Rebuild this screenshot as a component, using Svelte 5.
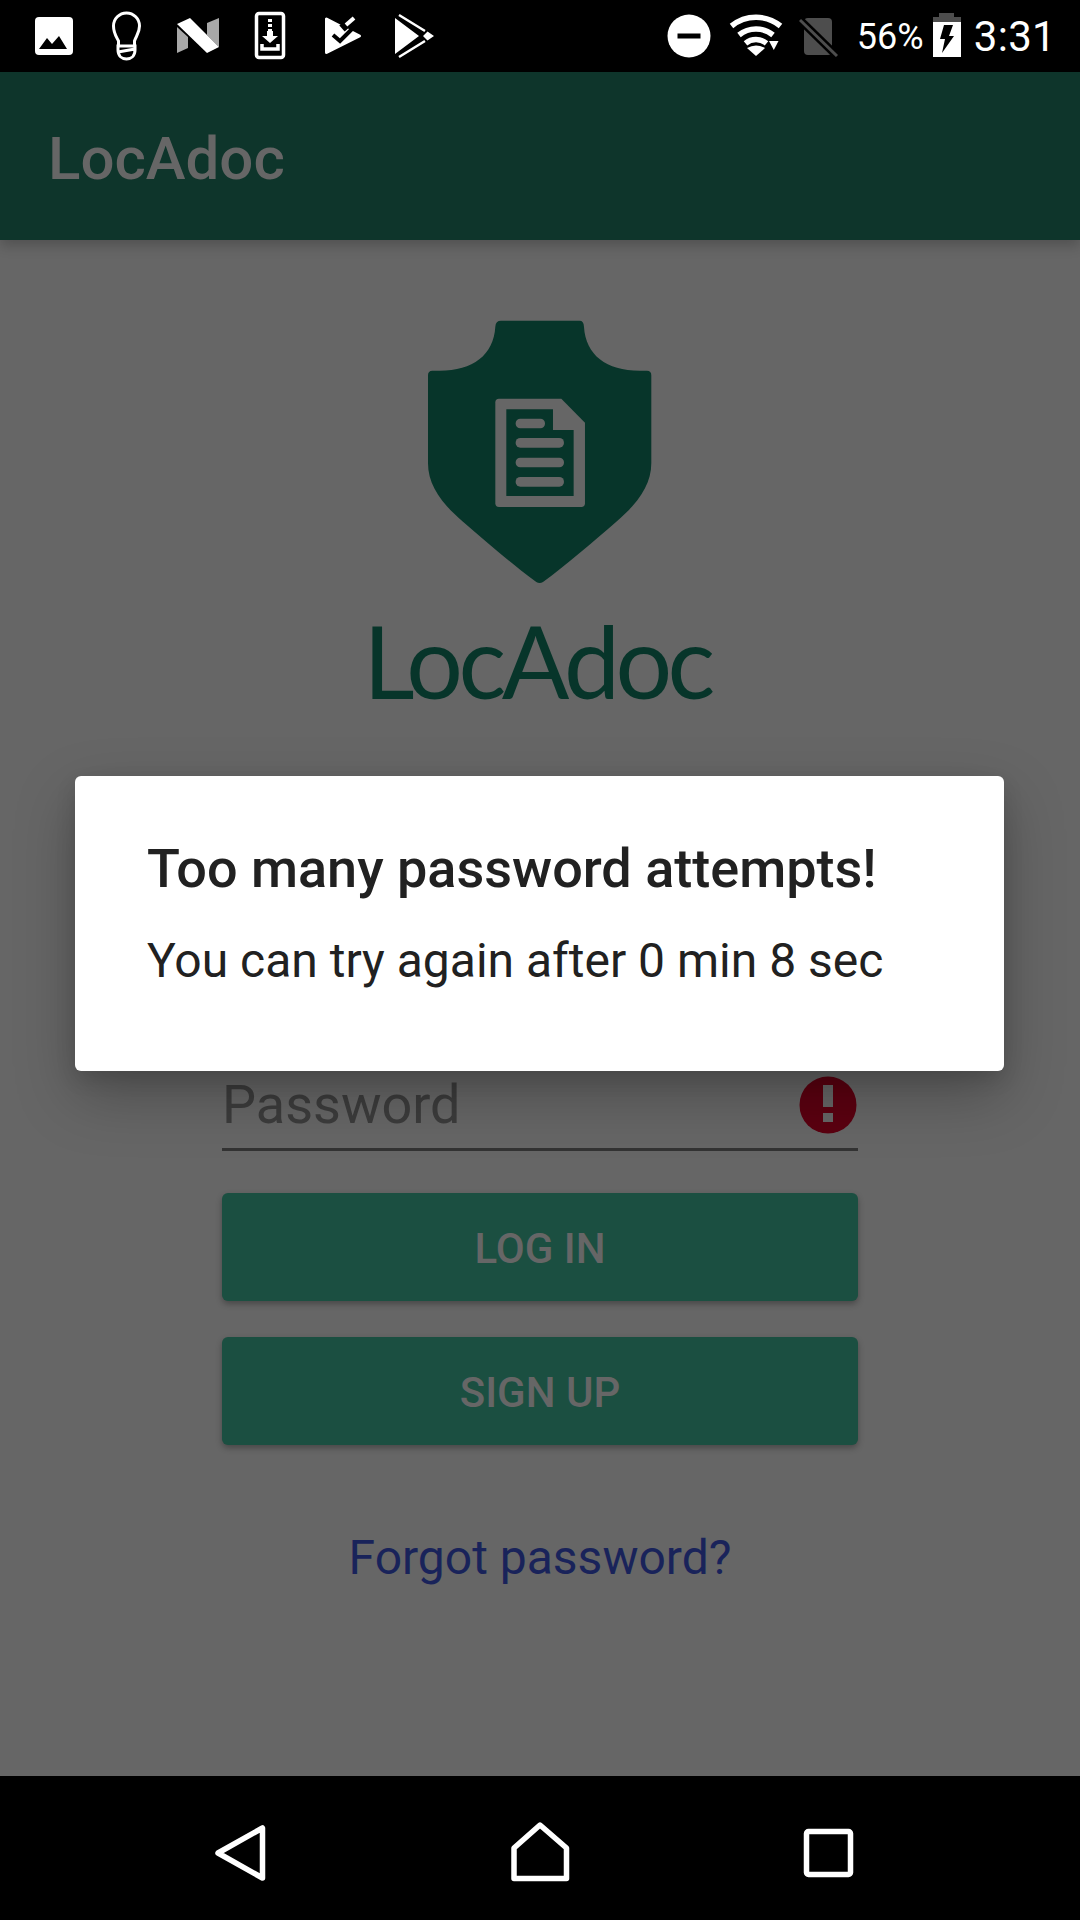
<script>
  const title = 'LocAdoc';
</script>

<div class="screen">
  <header class="status">
    <div class="notif">
      <svg viewBox="0 0 72 72"><rect x="17" y="17" width="38" height="38" rx="4" fill="#fff"/><path d="M21 49 L29 38 L34 44 L41 36 L49 49Z" fill="#000"/></svg>
      <svg viewBox="0 0 72 72"><path d="M28.5 45 V41 C26 36 23.5 33 23.5 26 A13 13 0 1 1 49.5 26 C49.5 33 46 36 44.5 41 V45" fill="none" stroke="#fff" stroke-width="3"/><path d="M28 46 H45 V50 C45 56 41 59 36.5 59 C32 59 28 56 28 50 Z M28 52 L45 49" fill="none" stroke="#fff" stroke-width="3"/></svg>
      <svg viewBox="0 0 72 72"><path d="M15 27 L15 53 L26 48 L26 37Z M45 23 L57 18 L57 47 L45 35Z" fill="#a8a8a8"/><path d="M15 24 L28 18 L57 47 L45 53Z" fill="#fff"/></svg>
      <svg viewBox="0 0 72 72"><rect x="22.5" y="13.5" width="27" height="44" rx="2.5" fill="none" stroke="#fff" stroke-width="3.5"/><path d="M34 19h4v3h-4zM34 24h4v3h-4zM34 29h4v3h-4zM33 31h6v5h5l-8 7-8-7h5z" fill="#fff"/><path d="M28 44 V49 H44 V44" fill="none" stroke="#fff" stroke-width="3.5"/></svg>
      <svg viewBox="0 0 72 72"><path d="M20.5 19 V52.5 L53.5 36Z" fill="#fff" stroke="#fff" stroke-width="3" stroke-linejoin="round"/><path d="M27 35 L34 41 L47 28" fill="none" stroke="#000" stroke-width="4"/><path d="M36 28.5 L50 16" fill="none" stroke="#000" stroke-width="8"/><path d="M40 25 L48 18" fill="none" stroke="#fff" stroke-width="4"/></svg>
      <svg viewBox="0 0 72 72"><path d="M17 18 V54 L41 36Z M45 36 L49.5 31.5 L56 36 L49.5 40.5Z" fill="#fff"/><path d="M21 15 L47 31 M21 57 L47 41" stroke="#fff" stroke-width="2.5" fill="none"/></svg>
    </div>
    <div class="sys">
      <svg class="dnd" viewBox="0 0 44 44"><circle cx="22" cy="22" r="21.5" fill="#fff"/><rect x="10.5" y="19.5" width="23" height="5" fill="#000"/></svg>
      <svg class="wifi" viewBox="0 0 50 42"><g fill="none" stroke="#fff" stroke-width="5.5"><path d="M0.5 11 A38.7 38.7 0 0 1 49.5 11"/><path d="M8 20 A27 27 0 0 1 42 20"/><path d="M14.5 28.3 A16.5 16.5 0 0 1 35.5 28.3"/></g><path d="M25 41 L16 33 Q25 28 34 33Z" fill="#fff"/><path d="M38 26h9.5l-4.7 9z" fill="#fff"/></svg>
      <svg class="sim" viewBox="0 0 40 40"><path d="M9 1 H29 Q33 1 33 5 V34 Q33 38 29 38 H9 Q5 38 5 34 V5 Q5 1 9 1Z" fill="#4d4d4d"/><path d="M0 2 L37 38" stroke="#000" stroke-width="8"/><path d="M1 3 L38 39" stroke="#4d4d4d" stroke-width="3"/></svg>
      <span class="pct">56%</span>
      <svg class="batt" viewBox="0 0 28 44"><path d="M6 0h15v4h7v9H0V4h6z" fill="#4d4d4d"/><rect y="9" width="28" height="35" fill="#fff"/><path d="M11 12 H20 L16 23 H21 L9 40 L12 26 H7Z" fill="#000"/></svg>
      <span class="time">3:31</span>
    </div>
  </header>

  <div class="appbar">{title}</div>

  <main class="content">
    <svg class="shield" viewBox="265 60 670 795">
      <path d="M484 62 H720 Q732 62 733 80 C738 165 800 212 900 212 H922 Q935 212 935 226 V490 C935 555 895 610 830 665 C760 725 680 795 610 846 Q600 852 590 846 C520 795 440 725 370 665 C305 610 265 555 265 490 V226 Q265 212 278 212 H300 C400 212 462 165 467 80 Q468 62 484 62Z" fill="#07352a"/>
      <path d="M478 296 H665 L736 368 V610 Q736 621 725 621 H478 Q467 621 467 610 V307 Q467 296 478 296Z" fill="#666"/>
      <path d="M500 328 H640 V390 H702 V588 H500Z" fill="#07352a"/>
      <g fill="#666"><rect x="528" y="356" width="88" height="29" rx="14"/><rect x="528" y="414" width="145" height="29" rx="14"/><rect x="528" y="473" width="145" height="29" rx="14"/><rect x="528" y="531" width="145" height="29" rx="14"/></g>
    </svg>
    <div class="brand">LocAdoc</div>

    <div class="field">
      <span class="ph">Password</span>
      <svg class="err" viewBox="0 0 58 58"><circle cx="29" cy="29" r="28.5" fill="#5b0010"/><rect x="24" y="9" width="10" height="22" fill="#666"/><rect x="24" y="37" width="10" height="9" fill="#666"/></svg>
    </div>

    <button class="btn first">LOG IN</button>
    <button class="btn second">SIGN UP</button>
    <div class="forgot">Forgot password?</div>
  </main>

  <nav class="nav">
    <svg viewBox="0 0 120 144"><path d="M82.5 52 V102 L38 77Z" fill="none" stroke="#fff" stroke-width="5.5" stroke-linejoin="round"/></svg>
    <svg viewBox="0 0 120 144"><path d="M34 72 L60 49 L86.5 72 V102.5 H34Z" fill="none" stroke="#fff" stroke-width="5.5" stroke-linejoin="round"/></svg>
    <svg viewBox="0 0 120 144"><rect x="26.5" y="55.5" width="44" height="43" rx="2" fill="none" stroke="#fff" stroke-width="5.5"/></svg>
  </nav>

  <div class="dialog" role="alertdialog">
    <h2>Too many password attempts!</h2>
    <p>You can try again after 0 min 8 sec</p>
  </div>
</div>

<style>
  :global(body) { margin: 0; background: #666; }
  .screen {
    position: relative;
    width: 1080px;
    height: 1920px;
    display: flex;
    flex-direction: column;
    overflow: hidden;
    background: #666;
    font-family: Roboto, "Liberation Sans", sans-serif;
  }
  .status {
    height: 72px;
    flex: none;
    background: #000;
    display: flex;
    justify-content: space-between;
    color: #fff;
  }
  .notif { display: flex; padding-left: 18px; }
  .notif svg { width: 72px; height: 72px; display: block; }
  .sys { display: flex; align-items: flex-start; padding-right: 24px; }
  .sys svg { display: block; flex: none; }
  .dnd { width: 44px; height: 44px; margin-top: 14px; }
  .wifi { width: 50px; height: 42px; margin: 15px 0 0 20px; overflow: visible; }
  .sim { width: 40px; height: 40px; margin: 17px 0 0 18px; }
  .pct { font-size: 36px; line-height: 42px; margin: 16px 0 0 18px; width: 65px; }
  .batt { width: 28px; height: 44px; margin: 13px 0 0 11px; }
  .time { font-size: 42px; line-height: 50px; margin: 12px 0 0 13px; letter-spacing: 0.3px; }

  .appbar {
    position: relative;
    z-index: 1;
    height: 168px;
    flex: none;
    box-sizing: border-box;
    padding-left: 48px;
    background: #0e352b;
    color: #666;
    font-size: 60px;
    font-weight: 500;
    line-height: 174px;
    box-shadow: 0 6px 12px rgba(0, 0, 0, 0.2);
  }

  .content {
    flex: 1;
    display: flex;
    flex-direction: column;
    align-items: center;
    padding-top: 80px;
  }
  .shield { width: 223.3px; height: 265px; display: block; filter: blur(0.6px); }
  .brand {
    margin: 20px 6px 0 0;
    font-family: Lato, sans-serif;
    font-weight: 400;
    font-size: 100px;
    line-height: 110px;
    color: #07352a;
    letter-spacing: -4.5px;
    filter: blur(0.6px);
  }
  .field {
    width: 636px;
    height: 81px;
    margin-top: 352px;
    display: flex;
    justify-content: space-between;
    align-items: flex-start;
    border-bottom: 3px solid #333;
  }
  .ph { font-size: 54px; line-height: 64px; color: #3c3c3c; margin-top: 6px; }
  .err { width: 58px; height: 58px; margin: 9px 1px 0 0; display: block; }
  .btn {
    width: 636px;
    height: 108px;
    flex: none;
    padding: 2px 0 0;
    border: 0;
    border-radius: 6px;
    background: #1b4f41;
    color: #666;
    font: 500 42px Roboto, sans-serif;
    box-shadow: 0 3px 6px rgba(0, 0, 0, 0.3);
  }
  .first { margin-top: 42px; }
  .second { margin-top: 36px; }
  .forgot { margin-top: 85px; font-size: 48px; line-height: 56px; color: #19235a; }

  .nav {
    height: 144px;
    flex: none;
    background: #000;
    display: flex;
    gap: 180px;
    padding-left: 180px;
  }
  .nav svg { width: 120px; height: 144px; display: block; }

  .dialog {
    position: absolute;
    left: 75px;
    top: 776px;
    width: 929px;
    height: 295px;
    box-sizing: border-box;
    padding: 63px 72px 0;
    background: #fff;
    border-radius: 6px;
    box-shadow: 0 24px 60px rgba(0, 0, 0, 0.26), 0 8px 20px rgba(0, 0, 0, 0.12);
    color: #212121;
  }
  h2 { margin: 0; font-size: 54px; font-weight: 500; line-height: 60px; }
  p { margin: 34px 0 0; font-size: 48px; font-weight: 400; line-height: 56px; }
</style>
